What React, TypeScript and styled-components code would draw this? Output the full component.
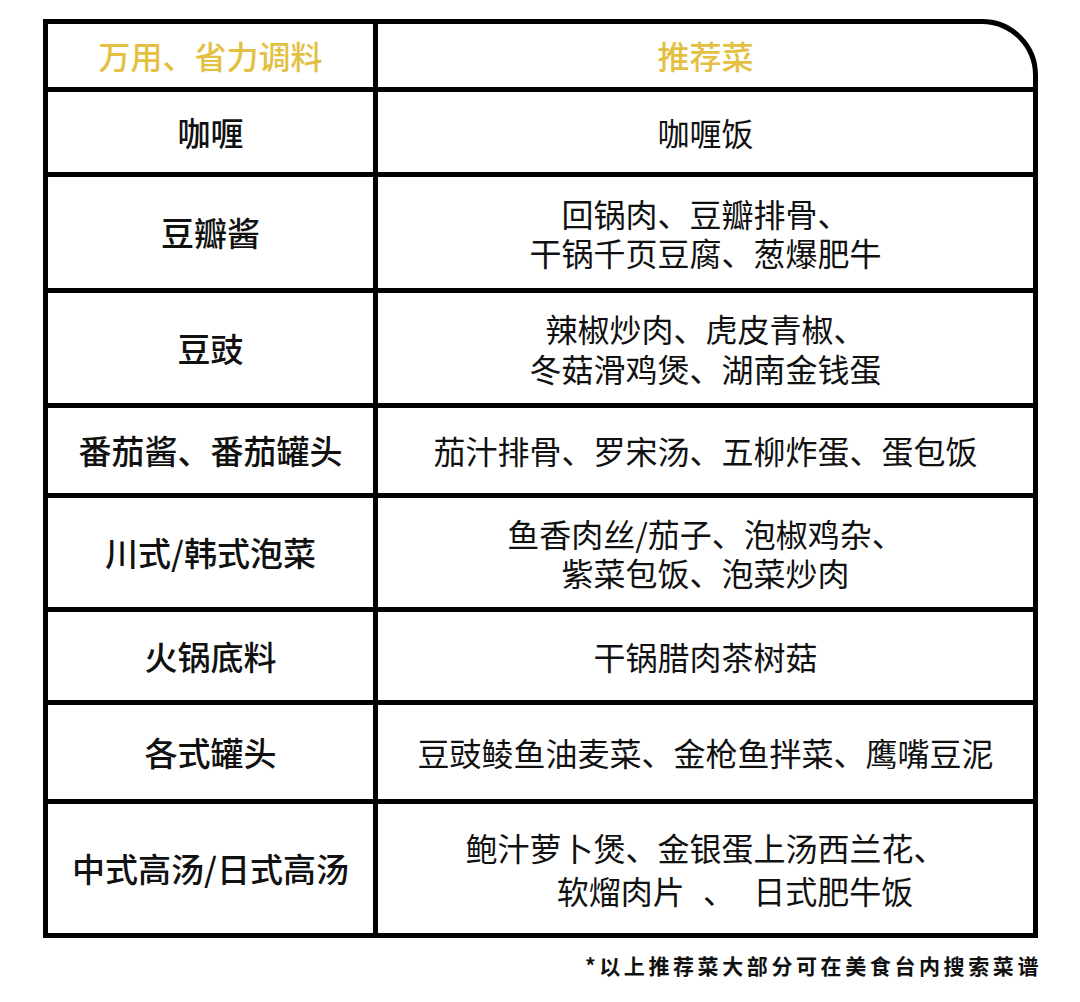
import React from "react";
import styled, { createGlobalStyle } from "styled-components";

const GlobalStyle = createGlobalStyle`
  html, body {
    margin: 0;
    padding: 0;
    background: #fff;
  }
  body {
    font-family: "Noto Sans CJK SC", "Noto Sans", sans-serif;
  }
`;

const Page = styled.div`
  width: 1080px;
  padding: 19px 0 0 43px;
  box-sizing: border-box;
`;

const Table = styled.div`
  width: 995px;
  box-sizing: border-box;
  border: 5px solid #000;
  border-top-right-radius: 56px;
  background: #000;
  overflow: hidden;
  display: grid;
  grid-template-columns: 325px 655px;
  grid-template-rows: 63px 80px 111px 110px 85px 109px 88px 94px 129px;
  gap: 5px;
`;

const Cell = styled.div<{ $head?: boolean; $side?: boolean; $lh?: number }>`
  background: #fff;
  display: flex;
  flex-direction: column;
  align-items: center;
  justify-content: center;
  text-align: center;
  font-size: ${(p) => (p.$head ? 32 : p.$side ? 33 : 32)}px;
  font-weight: ${(p) => (p.$head || p.$side ? 500 : 400)};
  line-height: ${(p) => p.$lh ?? 39}px;
  color: ${(p) => (p.$head ? "#e4c042" : "#111")};
  white-space: nowrap;
`;

const Line = styled.span<{ $shift?: number; $gap?: number }>`
  display: block;
  padding-left: ${(p) => p.$shift ?? 0}px;
  word-spacing: ${(p) => p.$gap ?? 0}px;
`;

const Note = styled.div`
  width: 999px;
  margin-top: 13px;
  text-align: right;
  font-size: 21px;
  font-weight: 700;
  letter-spacing: 3.6px;
  line-height: 28px;
  color: #111;
`;

type Row = {
  name: string;
  dishes: string[];
  lh?: number;
  shift?: number[];
  gap?: number[];
};

const rows: Row[] = [
  { name: "咖喱", dishes: ["咖喱饭"] },
  { name: "豆瓣酱", dishes: ["回锅肉、豆瓣排骨、", "干锅千页豆腐、葱爆肥牛"] },
  { name: "豆豉", dishes: ["辣椒炒肉、虎皮青椒、", "冬菇滑鸡煲、湖南金钱蛋"], lh: 40 },
  { name: "番茄酱、番茄罐头", dishes: ["茄汁排骨、罗宋汤、五柳炸蛋、蛋包饭"] },
  { name: "川式/韩式泡菜", dishes: ["鱼香肉丝/茄子、泡椒鸡杂、", "紫菜包饭、泡菜炒肉"] },
  { name: "火锅底料", dishes: ["干锅腊肉茶树菇"] },
  { name: "各式罐头", dishes: ["豆豉鲮鱼油麦菜、金枪鱼拌菜、鹰嘴豆泥"] },
  {
    name: "中式高汤/日式高汤",
    dishes: ["鲍汁萝卜煲、金银蛋上汤西兰花、", "软熘肉片 、 日式肥牛饭"],
    lh: 43,
    shift: [0, 59],
    gap: [0, 11],
  },
];

export default function App() {
  return (
    <Page>
      <GlobalStyle />
      <Table>
        <Cell $head>万用、省力调料</Cell>
        <Cell $head>推荐菜</Cell>
        {rows.map((r) => (
          <React.Fragment key={r.name}>
            <Cell $side>{r.name}</Cell>
            <Cell $lh={r.lh}>
              {r.dishes.map((d, i) => (
                <Line key={d} $shift={r.shift?.[i]} $gap={r.gap?.[i]}>
                  {d}
                </Line>
              ))}
            </Cell>
          </React.Fragment>
        ))}
      </Table>
      <Note>*以上推荐菜大部分可在美食台内搜索菜谱</Note>
    </Page>
  );
}
